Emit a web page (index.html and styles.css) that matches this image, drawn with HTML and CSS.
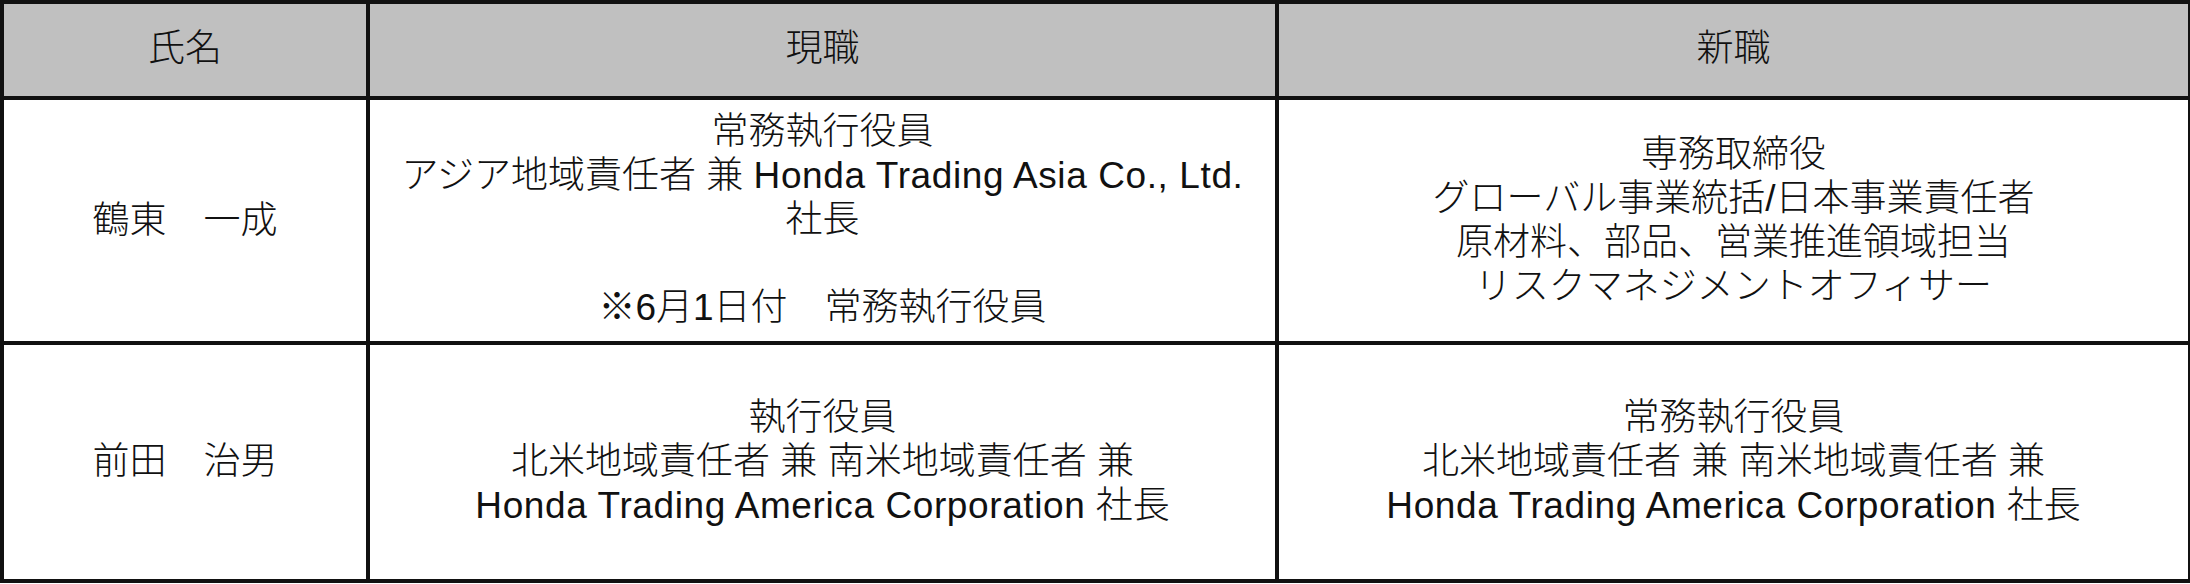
FILE: index.html
```html
<!DOCTYPE html>
<html lang="ja">
<head>
<meta charset="utf-8">
<title>役員人事</title>
<link rel="stylesheet" href="styles.css">
</head>
<body>
<table class="roster">
  <colgroup>
    <col class="col-name">
    <col class="col-current">
    <col class="col-new">
  </colgroup>
  <thead>
    <tr class="head-row">
      <th>氏名</th>
      <th>現職</th>
      <th>新職</th>
    </tr>
  </thead>
  <tbody>
    <tr class="row-a">
      <td>鶴東　一成</td>
      <td>
        <span class="line">常務執行役員</span>
        <span class="line">アジア地域責任者 兼 <span class="latin">Honda Trading Asia Co., Ltd.</span></span>
        <span class="line">社長</span>
        <span class="line blank"></span>
        <span class="line">※<span class="num">6</span>月<span class="num">1</span>日付　常務執行役員</span>
      </td>
      <td>
        <span class="line">専務取締役</span>
        <span class="line">グローバル事業統括<span class="num">/</span>日本事業責任者</span>
        <span class="line">原材料、部品、営業推進領域担当</span>
        <span class="line">リスクマネジメントオフィサー</span>
      </td>
    </tr>
    <tr class="row-b">
      <td>前田　治男</td>
      <td>
        <span class="line">執行役員</span>
        <span class="line">北米地域責任者 兼 南米地域責任者 兼</span>
        <span class="line"><span class="latin">Honda Trading America Corporation</span> 社長</span>
      </td>
      <td>
        <span class="line">常務執行役員</span>
        <span class="line">北米地域責任者 兼 南米地域責任者 兼</span>
        <span class="line"><span class="latin">Honda Trading America Corporation</span> 社長</span>
      </td>
    </tr>
  </tbody>
</table>
</body>
</html>
```

FILE: styles.css
```css
html, body {
  margin: 0;
  padding: 0;
  background: #ffffff;
}

.roster {
  border-collapse: collapse;
  table-layout: fixed;
  width: 2188px;
  margin: 0;
  font-family: "Liberation Sans", "Noto Sans CJK JP", sans-serif;
  font-weight: 300;
  font-size: 37px;
  line-height: 44px;
  color: #111111;
}

.col-name { width: 366px; }
.col-current { width: 909px; }
.col-new { width: 913px; }

.roster th,
.roster td {
  border: 4px solid #111111;
  text-align: center;
  vertical-align: middle;
  padding: 0;
  font-weight: 300;
}

.roster th {
  background: #c0c0c0;
  padding-bottom: 2px;
}

.line {
  display: block;
  height: 44px;
  white-space: nowrap;
}

.latin {
  font-weight: 400;
  letter-spacing: 0.6px;
}

.num {
  font-weight: 400;
}

.row-a td:nth-child(2) {
  padding-bottom: 2px;
}

.head-row { height: 96px; }
.row-a { height: 245px; }
.row-b { height: 238px; }
```
